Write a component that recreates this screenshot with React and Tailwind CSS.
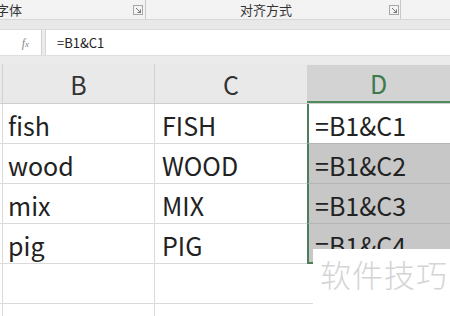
import React from "react";

const font = { fontFamily: '"Noto Sans CJK SC", "Noto Sans", sans-serif' };

const rows = [
  ["fish", "FISH", "=B1&C1"],
  ["wood", "WOOD", "=B1&C2"],
  ["mix", "MIX", "=B1&C3"],
  ["pig", "PIG", "=B1&C4"],
  ["", "", ""],
  ["", "", ""],
];

// small dialog launcher icon at the corner of a ribbon group
const Launcher = () => (
  <svg width="10" height="10" viewBox="0 0 10 10" className="shrink-0">
    <rect x="0.5" y="0.5" width="9" height="9" fill="none" stroke="#a8a8a8" />
    <path d="M3 3 L7.5 7.5 M7.5 4.5 V7.5 H4.5" fill="none" stroke="#777" strokeWidth="1" />
  </svg>
);

export default function App() {
  return (
    <div className="relative w-[450px] h-[316px] overflow-hidden bg-white text-[#222]" style={font}>
      {/* ribbon group labels */}
      <div className="flex h-[19px] bg-[#f3f3f3] text-[13px] leading-none">
        <div className="flex items-center justify-between w-[146px] pr-[2px] border-r border-[#c9c9c9]">
          <span className="-ml-[4px] text-[#333]">字体</span>
          <Launcher />
        </div>
        <div className="flex items-center justify-between w-[255px] pl-[94px] pr-[1px] border-r border-[#c9c9c9]">
          <span className="text-[#333]">对齐方式</span>
          <Launcher />
        </div>
      </div>
      <div className="h-[10px] bg-[#e8e8e8] border-t border-[#d8d8d8]" />

      {/* formula bar */}
      <div className="flex h-[26px] bg-[#ececec] border-t border-[#dcdcdc]">
        <div className="w-[42px] bg-white border-r border-[#d0d0d0] flex items-center justify-end pr-[12px]">
          <span className="italic text-[12px] text-[#888]" style={{ fontFamily: '"Liberation Serif", serif' }}>
            f<span className="text-[9px]">x</span>
          </span>
        </div>
        <div className="w-[3px]" />
        <div className="flex-1 bg-white border-l border-[#d6d6d6] flex items-center pl-[11px] text-[13px] text-[#222]">
          =B1&amp;C1
        </div>
      </div>
      <div className="h-[9px] bg-[#ebebeb] border-t border-[#dedede]" />

      {/* column headers */}
      <div className="flex h-[40px] bg-[#e9e9e9] border-b border-[#cfcfcf]">
        <div className="w-[3px] border-r border-[#d2d2d2]" />
        <div className="w-[152px] border-r border-[#d2d2d2] flex items-center justify-center pt-[3px] text-[25px] text-[#333]">B</div>
        <div className="w-[152px] flex items-center justify-center pt-[3px] text-[25px] text-[#333]">C</div>
        <div className="flex-1 mt-[1px] bg-[#d3d3d3] border-b-2 border-[#4e8a5c] flex items-center justify-center pt-[2px] text-[25px] text-[#3d7a4e]">D</div>
      </div>

      {/* rows */}
      {rows.map((r, i) => {
        const sel = i < 4;
        const dCls = sel
          ? (i === 0 ? "bg-white " : "bg-[#c7c7c7] ") +
            "border-l-2 border-l-[#4a7f58] " +
            (i === 3 ? "border-b-2 border-b-[#4a7f58]" : "border-b border-b-[#b5b5b5]")
          : "border-b border-[#dadada]";
        return (
          <div key={i} className="flex h-[40px] text-[25px] leading-none">
            <div className="w-[3px] border-r border-b border-[#dadada]" />
            <div className="w-[152px] border-r border-b border-[#dadada] flex items-center pl-[5px] pt-[4px]">{r[0]}</div>
            <div className="w-[152px] border-b border-[#dadada] flex items-center pl-[7px] pt-[4px]">{r[1]}</div>
            <div className={"flex-1 flex items-center pl-[6px] pt-[4px] " + dCls}>{r[2]}</div>
          </div>
        );
      })}

      {/* watermark */}
      <div className="absolute left-[313px] top-[249px] right-0 bottom-0 bg-white pl-[7px] pt-[9px]">
        <span className="text-[31px] font-light leading-none tracking-[1px] text-[#d4d4d4]">软件技巧</span>
      </div>
    </div>
  );
}
